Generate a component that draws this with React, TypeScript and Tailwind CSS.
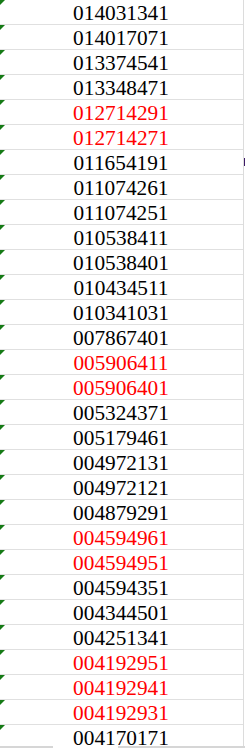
import React from "react";

const rows: [string, boolean][] = [
  ["014031341", false],
  ["014017071", false],
  ["013374541", false],
  ["013348471", false],
  ["012714291", true],
  ["012714271", true],
  ["011654191", false],
  ["011074261", false],
  ["011074251", false],
  ["010538411", false],
  ["010538401", false],
  ["010434511", false],
  ["010341031", false],
  ["007867401", false],
  ["005906411", true],
  ["005906401", true],
  ["005324371", false],
  ["005179461", false],
  ["004972131", false],
  ["004972121", false],
  ["004879291", false],
  ["004594961", true],
  ["004594951", true],
  ["004594351", false],
  ["004344501", false],
  ["004251341", false],
  ["004192951", true],
  ["004192941", true],
  ["004192931", true],
  ["004170171", false],
];

export default function App() {
  return (
    <div className="relative w-[245px] h-[748px] overflow-hidden bg-white">
      <div className="w-[244px] border-r border-[#dcdcdc]">
        {rows.map(([v, red], i) => (
          <div
            key={i}
            className="relative h-[25px] border-b border-[#e0e0e0] flex items-end justify-center pr-[1px]"
          >
            <div className="absolute left-0 top-0 w-0 h-0 border-t-[5px] border-r-[5px] border-t-[#157a15] border-r-transparent" />
            <span
              className={
                "leading-[21px] text-[21.3px] " +
                (red ? "text-[#ff0000]" : "text-black")
              }
              style={{ fontFamily: '"Liberation Serif", "Times New Roman", serif' }}
            >
              {v}
            </span>
          </div>
        ))}
      </div>
      <div className="absolute right-0 top-[158px] w-[1px] h-[8px] bg-[#3d1a66]" />
      <div className="absolute left-0 bottom-0 w-[53px] h-[2px] bg-[#d6d6d6]" />
      <div className="absolute left-[118px] bottom-0 w-[127px] h-[2px] bg-[#d6d6d6]" />
    </div>
  );
}
